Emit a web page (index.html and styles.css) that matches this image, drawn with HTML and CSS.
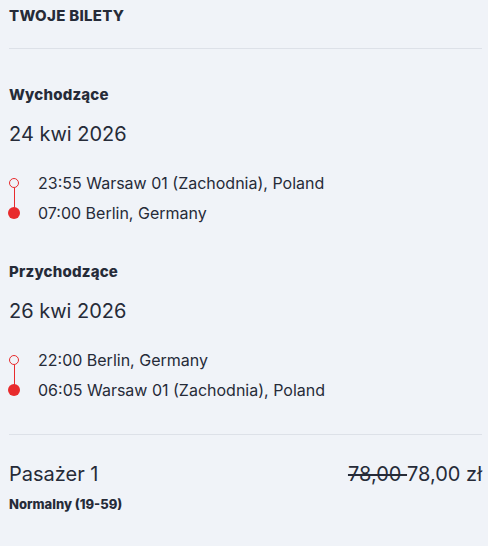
FILE: index.html
```html
<!DOCTYPE html>
<html lang="pl">
<head>
<meta charset="utf-8">
<link rel="stylesheet" href="styles.css">
</head>
<body>
<div class="panel">
  <h1 class="title">TWOJE BILETY</h1>
  <div class="divider"></div>
  <section class="trip">
    <h2 class="trip-label">Wychodzące</h2>
    <div class="trip-date">24 kwi 2026</div>
    <div class="route">
      <div class="stop">
        <span class="dot dot-open"></span>
        <span class="stop-text">23:55 Warsaw 01 (Zachodnia), Poland</span>
      </div>
      <div class="stop">
        <span class="dot dot-filled"></span>
        <span class="stop-text">07:00 Berlin, Germany</span>
      </div>
    </div>
  </section>
  <section class="trip">
    <h2 class="trip-label">Przychodzące</h2>
    <div class="trip-date">26 kwi 2026</div>
    <div class="route">
      <div class="stop">
        <span class="dot dot-open"></span>
        <span class="stop-text">22:00 Berlin, Germany</span>
      </div>
      <div class="stop">
        <span class="dot dot-filled"></span>
        <span class="stop-text">06:05 Warsaw 01 (Zachodnia), Poland</span>
      </div>
    </div>
  </section>
  <div class="divider divider-bottom"></div>
  <div class="passenger">
    <div class="passenger-info">
      <div class="passenger-name">Pasażer 1</div>
      <div class="passenger-type">Normalny (19-59)</div>
    </div>
    <div class="price"><s class="old-price">78,00 </s>78,00 zł</div>
  </div>
</div>
</body>
</html>
```
FILE: styles.css
```css
html, body {
  margin: 0;
  padding: 0;
  background: #f0f3f8;
}
body {
  font-family: "Inter", "Noto Sans", sans-serif;
  color: #262b38;
}
.panel {
  padding: 7px 6px 0 9px;
}
.title {
  margin: 0;
  font-size: 15px;
  font-weight: 800;
  line-height: 18px;
  letter-spacing: 0.3px;
}
.divider {
  height: 1px;
  background: #dde1e8;
  margin-top: 23px;
}
.trip {
  padding-top: 37px;
}
.trip + .trip {
  padding-top: 40px;
}
.trip-label {
  margin: 0;
  font-size: 15px;
  font-weight: 800;
  line-height: 18px;
  letter-spacing: 0.2px;
}
.trip-date {
  font-size: 20px;
  line-height: 26px;
  margin-top: 17px;
}
.route {
  margin-top: 26px;
  display: flex;
  flex-direction: column;
  gap: 10px;
}
.stop {
  display: flex;
  align-items: center;
  gap: 19px;
  height: 20px;
}
.stop-text {
  font-size: 16px;
  line-height: 20px;
}
.dot {
  width: 10px;
  height: 10px;
  border-radius: 50%;
  box-sizing: border-box;
  flex: none;
  position: relative;
}
.dot-open {
  border: 1.5px solid #e82b2d;
  background: #f0f3f8;
}
.dot-open::after {
  content: "";
  position: absolute;
  left: 3.5px;
  top: 8.5px;
  width: 1px;
  height: 22px;
  background: #e82b2d;
}
.dot-filled {
  width: 12px;
  height: 12px;
  margin-left: -1px;
  margin-right: -1px;
  background: #e82b2d;
}
.divider-bottom {
  margin-top: 34px;
}
.passenger {
  display: flex;
  justify-content: space-between;
  align-items: flex-start;
  padding-top: 26px;
}
.passenger-name {
  font-size: 20px;
  line-height: 26px;
}
.passenger-type {
  font-size: 13px;
  font-weight: 800;
  line-height: 16px;
  margin-top: 9px;
}
.price {
  font-size: 20px;
  line-height: 26px;
}
.old-price {
  text-decoration: line-through;
}
```
